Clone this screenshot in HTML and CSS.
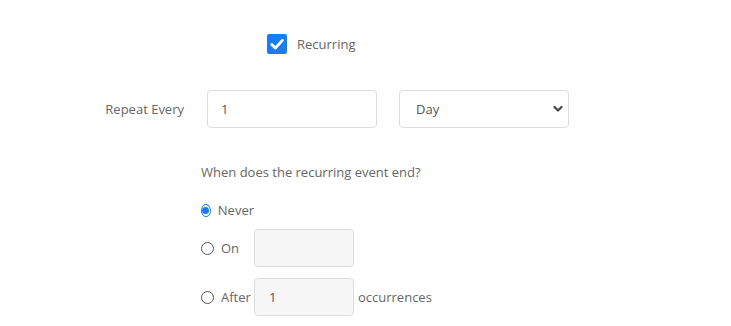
FILE: index.html
```html
<!DOCTYPE html>
<html>
<head>
<meta charset="utf-8">
<link rel="stylesheet" href="styles.css">
</head>
<body>
<div class="page">
  <div class="check-row">
    <span class="checkbox">
      <svg width="20" height="20" viewBox="0 0 20 20"><rect width="20" height="20" rx="2" fill="#1a7cf2"/><path d="M4.8 10.4 L8.4 14 L15.4 6.4" fill="none" stroke="#fff" stroke-width="2.8" stroke-linecap="round" stroke-linejoin="round"/></svg>
    </span>
    <span class="check-label">Recurring</span>
  </div>

  <div class="repeat-row">
    <label class="repeat-label">Repeat Every</label>
    <input class="text-input" type="text" value="1">
    <div class="select-wrap">
      <select class="select"><option>Day</option></select>
      <svg class="chev" width="10" height="8" viewBox="0 0 10 8"><path d="M1.5 2 L5 5.5 L8.5 2" fill="none" stroke="#444" stroke-width="2.2" stroke-linecap="round" stroke-linejoin="round"/></svg>
    </div>
  </div>

  <div class="ends">
    <div class="question">When does the recurring event end?</div>
    <div class="radio-row never">
      <span class="opt"><span class="radio checked"><span class="dot"></span></span><span class="opt-text">Never</span></span>
    </div>
    <div class="radio-row on">
      <span class="opt"><span class="radio"></span><span class="opt-text">On</span></span>
      <input class="small-input" type="text" value="">
    </div>
    <div class="radio-row after">
      <span class="opt"><span class="radio"></span><span class="opt-text">After</span></span>
      <input class="small-input" type="text" value="1">
      <span class="suffix">occurrences</span>
    </div>
  </div>
</div>
</body>
</html>
```

FILE: styles.css
```css
* { box-sizing: border-box; }
html, body { margin: 0; padding: 0; background: #fff; }
body {
  font-family: "Open Sans", "Noto Sans", sans-serif;
  font-size: 13px;
  color: #666;
}
.page { padding-top: 34px; }

.check-row {
  display: flex;
  align-items: center;
  margin-left: 267px;
  height: 20px;
  gap: 10px;
}
.checkbox { width: 20px; height: 20px; display: block; }
.checkbox svg { display: block; }
.check-label { color: #666; line-height: 20px; }

.repeat-row {
  display: flex;
  align-items: center;
  margin-top: 36px;
  height: 38px;
}
.repeat-label {
  width: 184px;
  text-align: right;
  margin-right: 23px;
  color: #666;
}
.text-input, .select {
  width: 170px;
  height: 38px;
  border: 1px solid #dcdcdc;
  border-radius: 4px;
  background: #fff;
  font-family: inherit;
  font-size: 13px;
  color: #555;
  outline: none;
}
.text-input { padding: 0 13px; }
.select-wrap { position: relative; margin-left: 22px; }
.select {
  -webkit-appearance: none;
  appearance: none;
  padding: 0 16px;
  display: block;
}
.chev { position: absolute; right: 6px; top: 15px; }

.ends { margin-left: 201px; margin-top: 34px; }
.question { line-height: 20px; color: #666; }
.radio-row { display: flex; align-items: center; }
.radio-row.never { margin-top: 18px; height: 20px; }
.radio-row.on { margin-top: 9px; height: 38px; }
.radio-row.after { margin-top: 11px; height: 38px; }
.opt { display: flex; align-items: center; width: 53px; }
.radio {
  width: 13px;
  height: 13px;
  border-radius: 50%;
  border: 1px solid #555;
  display: flex;
  align-items: center;
  justify-content: center;
  background: #fff;
}
.radio.checked { border: 1.5px solid #1a7cf2; }
.dot {
  width: 7px;
  height: 7px;
  border-radius: 50%;
  background: #1a7cf2;
  display: block;
}
.opt-text { margin-left: 7px; color: #666; }
.small-input {
  width: 100px;
  height: 38px;
  border: 1px solid #dcdcdc;
  border-radius: 4px;
  background: #f7f7f7;
  font-family: inherit;
  font-size: 13px;
  color: #555;
  padding: 0 14px;
  outline: none;
}
.suffix { margin-left: 4px; color: #666; }
```
